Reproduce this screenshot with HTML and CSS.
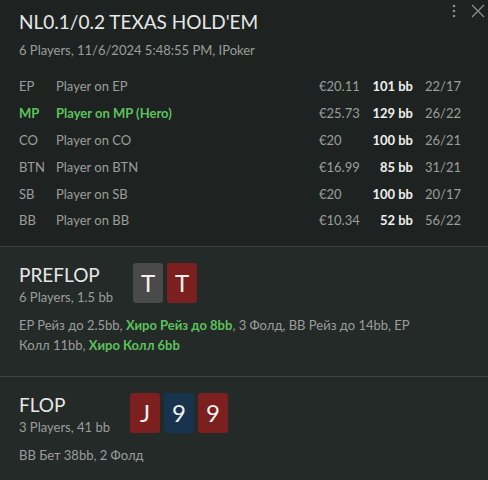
FILE: index.html
```html
<!DOCTYPE html>
<html lang="ru">
<head>
    <meta charset="UTF-8">
    <meta name="viewport" content="width=device-width, initial-scale=1.0">
    <title>Hand</title>
    <link rel="stylesheet" href="styles.css">
</head>
<body>
    <div class="hand">
        <div class="summary">
            <div class="tools">
                <svg class="menu-icon" width="6" height="16" viewBox="0 0 6 16">
                    <circle cx="3" cy="3" r="1.3"/>
                    <circle cx="3" cy="8" r="1.3"/>
                    <circle cx="3" cy="13" r="1.3"/>
                </svg>
                <svg class="close-icon" width="14" height="14" viewBox="0 0 14 14">
                    <path d="M1 1 L13 13 M13 1 L1 13"/>
                </svg>
            </div>
            <h1 class="title">NL0.1/0.2 TEXAS HOLD'EM</h1>
            <div class="subtitle">6 Players, 11/6/2024 5:48:55 PM, IPoker</div>

            <div class="players">
                <div class="player">
                    <span class="pos">EP</span><span class="name">Player on EP</span>
                    <span class="money">€20.11</span><span class="bb">101 bb</span><span class="stats">22/17</span>
                </div>
                <div class="player hero">
                    <span class="pos">MP</span><span class="name">Player on MP (Hero)</span>
                    <span class="money">€25.73</span><span class="bb">129 bb</span><span class="stats">26/22</span>
                </div>
                <div class="player">
                    <span class="pos">CO</span><span class="name">Player on CO</span>
                    <span class="money">€20</span><span class="bb">100 bb</span><span class="stats">26/21</span>
                </div>
                <div class="player">
                    <span class="pos">BTN</span><span class="name">Player on BTN</span>
                    <span class="money">€16.99</span><span class="bb">85 bb</span><span class="stats">31/21</span>
                </div>
                <div class="player">
                    <span class="pos">SB</span><span class="name">Player on SB</span>
                    <span class="money">€20</span><span class="bb">100 bb</span><span class="stats">20/17</span>
                </div>
                <div class="player">
                    <span class="pos">BB</span><span class="name">Player on BB</span>
                    <span class="money">€10.34</span><span class="bb">52 bb</span><span class="stats">56/22</span>
                </div>
            </div>
        </div>

        <div class="street">
            <div class="street-head">
                <div class="street-info">
                    <h2 class="street-name">PREFLOP</h2>
                    <div class="street-sub">6 Players, 1.5 bb</div>
                </div>
                <div class="cards">
                    <span class="card grey">T</span>
                    <span class="card red">T</span>
                </div>
            </div>
            <p class="actions">EP Рейз до 2.5bb, <b>Хиро Рейз до 8bb</b>, 3 Фолд, BB Рейз до 14bb, EP Колл 11bb, <b>Хиро Колл 6bb</b></p>
        </div>

        <div class="street">
            <div class="street-head">
                <div class="street-info">
                    <h2 class="street-name">FLOP</h2>
                    <div class="street-sub">3 Players, 41 bb</div>
                </div>
                <div class="cards">
                    <span class="card red">J</span>
                    <span class="card blue">9</span>
                    <span class="card red">9</span>
                </div>
            </div>
            <p class="actions">BB Бет 38bb, 2 Фолд</p>
        </div>
    </div>
</body>
</html>
```

FILE: styles.css
```css
body {
    margin: 0;
    background: #242a28;
    font-family: Lato, "Open Sans", sans-serif;
    color: #9b9e9c;
}

.hand {
    width: 488px;
    height: 480px;
    overflow: hidden;
}

.summary {
    position: relative;
    background: #1e2321;
    padding: 9px 0 12px 19px;
    border-bottom: 1px solid #3d4240;
}

.tools {
    position: absolute;
    top: 3px;
    right: 3px;
    display: flex;
    align-items: center;
    gap: 14px;
}

.menu-icon circle {
    fill: #8b8e8c;
}

.close-icon path {
    stroke: #8b8e8c;
    stroke-width: 1.3;
    fill: none;
}

.title {
    margin: 0;
    font-size: 19px;
    font-weight: normal;
    line-height: 26px;
    color: #e6e8e7;
}

.subtitle {
    font-size: 13px;
    line-height: 20px;
    margin-top: 5px;
}

.players {
    margin-top: 13px;
}

.player {
    display: grid;
    grid-template-columns: 37px 263px 50px 44px auto;
    height: 26.8px;
    align-items: center;
    font-size: 13px;
}

.player .bb {
    text-align: right;
    font-weight: bold;
    color: #eef0ef;
}

.player .stats {
    padding-left: 12px;
}

.player.hero .pos,
.player.hero .name {
    color: #5cc25c;
    font-weight: bold;
}

.street {
    padding: 16px 0 0 19px;
    border-bottom: 1px solid #3d4240;
    height: 113px;
}

.street-head {
    display: flex;
    align-items: flex-start;
    gap: 20px;
}

.street-name {
    margin: 0;
    font-size: 19px;
    font-weight: normal;
    line-height: 24px;
    color: #e6e8e7;
}

.street-sub {
    font-size: 13px;
    line-height: 20px;
}

.cards {
    display: flex;
    gap: 4px;
}

.card {
    width: 30px;
    height: 40px;
    border-radius: 3px;
    display: flex;
    align-items: center;
    justify-content: center;
    font-size: 24px;
    color: #f2f2f2;
}

.card.grey {
    background: #4a4a4a;
}

.card.red {
    background: #7c1f1f;
}

.card.blue {
    background: #17334d;
}

.actions {
    margin: 8px 0 0;
    padding-right: 60px;
    font-size: 13px;
    line-height: 20px;
}

.actions b {
    color: #5cc25c;
}
```
